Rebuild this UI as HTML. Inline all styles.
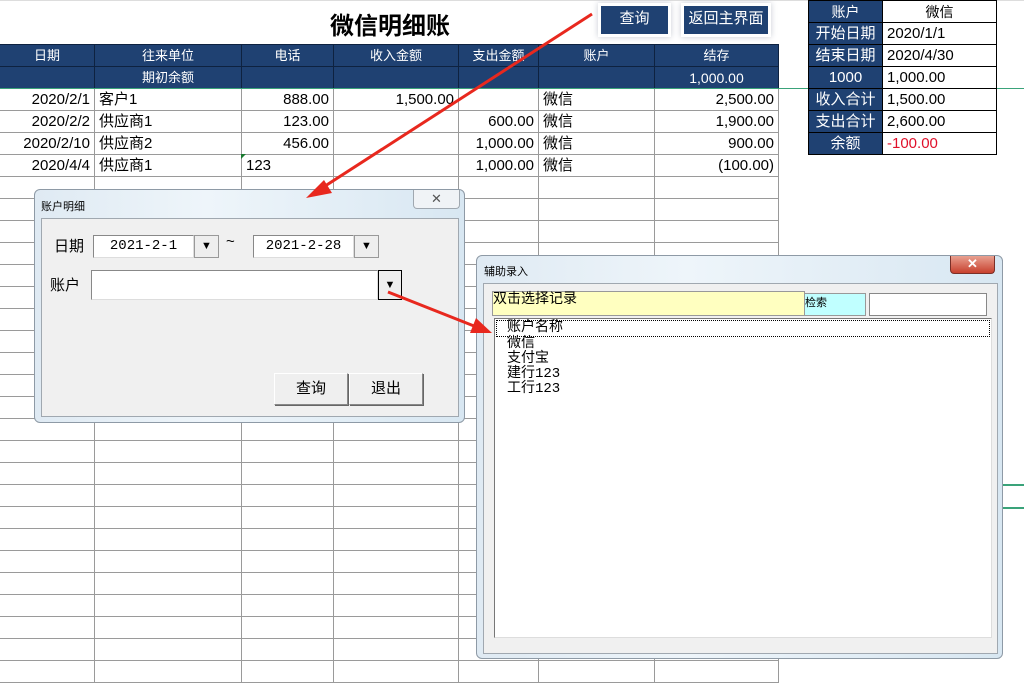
<!DOCTYPE html>
<html><head><meta charset="utf-8"><style>
*{margin:0;padding:0;box-sizing:border-box}
body{width:1024px;height:692px;overflow:hidden;background:#fff;position:relative;font-family:"Liberation Sans","Noto Sans CJK SC",sans-serif;font-size:15px;color:#000}
.a{position:absolute}
table{border-collapse:collapse;position:absolute}
td{border:1px solid #9a9a9a;height:22px;padding:0 4px;white-space:nowrap;overflow:hidden;font-size:15px;line-height:20px}
.h td{background:#1f4172;color:#fff;text-align:center;font-size:13px;border-color:#0e2240}
.h td.r{font-size:14px}
.r{text-align:right}
.btn{position:absolute;background:#1f4172;color:#fff;text-align:center;font-size:15px;line-height:26px;box-shadow:0 0 0 3px #fff,0 0 6px 3px #c8ccd4}
.dlg{position:absolute;background:linear-gradient(90deg,#dfeaf3,#eef5fa 40%,#d8e7f2);border:1px solid #8e9aa6;border-radius:6px}
.inner{position:absolute;background:#f0f0f0;border:1px solid #a0a8b0}
.f{position:absolute;background:#fff;border:1px solid #888;border-right-color:#ddd;border-bottom-color:#ddd;font-family:"Liberation Mono","Noto Sans CJK SC",monospace;font-size:14px;text-align:center;line-height:18px}
.dd{position:absolute;background:#eee;border:1px solid #999;font-size:11px;text-align:center;line-height:20px}
.pb{position:absolute;background:#efefef;border:1px solid #888;border-top-color:#fff;border-left-color:#fff;box-shadow:1px 1px 0 #666;text-align:center;font-size:15px;line-height:30px}
</style></head><body>
<div class="a" style="left:0;top:0;width:1024px;height:1px;background:#ddd"></div>
<div class="a" style="left:330px;top:6px;font-size:24px;font-weight:bold">微信明细账</div>
<div class="btn" style="left:601px;top:6px;width:67px;height:28px">查询</div>
<div class="btn" style="left:684px;top:6px;width:84px;height:28px">返回主界面</div>

<table style="left:-1px;top:44px">
<colgroup><col style="width:95px"><col style="width:147px"><col style="width:92px"><col style="width:125px"><col style="width:80px"><col style="width:116px"><col style="width:124px"></colgroup>
<tr class="h"><td>日期</td><td>往来单位</td><td>电话</td><td>收入金额</td><td>支出金额</td><td>账户</td><td>结存</td></tr>
<tr class="h"><td></td><td>期初余额</td><td></td><td></td><td></td><td></td><td class="r">1,000.00</td></tr>
<tr><td class="r">2020/2/1</td><td>客户1</td><td class="r">888.00</td><td class="r">1,500.00</td><td></td><td>微信</td><td class="r">2,500.00</td></tr>
<tr><td class="r">2020/2/2</td><td>供应商1</td><td class="r">123.00</td><td></td><td class="r">600.00</td><td>微信</td><td class="r">1,900.00</td></tr>
<tr><td class="r">2020/2/10</td><td>供应商2</td><td class="r">456.00</td><td></td><td class="r">1,000.00</td><td>微信</td><td class="r">900.00</td></tr>
<tr><td class="r">2020/4/4</td><td>供应商1</td><td>123</td><td></td><td class="r">1,000.00</td><td>微信</td><td class="r">(100.00)</td></tr>
<tr><td></td><td></td><td></td><td></td><td></td><td></td><td></td></tr><tr><td></td><td></td><td></td><td></td><td></td><td></td><td></td></tr><tr><td></td><td></td><td></td><td></td><td></td><td></td><td></td></tr><tr><td></td><td></td><td></td><td></td><td></td><td></td><td></td></tr><tr><td></td><td></td><td></td><td></td><td></td><td></td><td></td></tr><tr><td></td><td></td><td></td><td></td><td></td><td></td><td></td></tr><tr><td></td><td></td><td></td><td></td><td></td><td></td><td></td></tr><tr><td></td><td></td><td></td><td></td><td></td><td></td><td></td></tr><tr><td></td><td></td><td></td><td></td><td></td><td></td><td></td></tr><tr><td></td><td></td><td></td><td></td><td></td><td></td><td></td></tr><tr><td></td><td></td><td></td><td></td><td></td><td></td><td></td></tr><tr><td></td><td></td><td></td><td></td><td></td><td></td><td></td></tr><tr><td></td><td></td><td></td><td></td><td></td><td></td><td></td></tr><tr><td></td><td></td><td></td><td></td><td></td><td></td><td></td></tr><tr><td></td><td></td><td></td><td></td><td></td><td></td><td></td></tr><tr><td></td><td></td><td></td><td></td><td></td><td></td><td></td></tr><tr><td></td><td></td><td></td><td></td><td></td><td></td><td></td></tr><tr><td></td><td></td><td></td><td></td><td></td><td></td><td></td></tr><tr><td></td><td></td><td></td><td></td><td></td><td></td><td></td></tr><tr><td></td><td></td><td></td><td></td><td></td><td></td><td></td></tr><tr><td></td><td></td><td></td><td></td><td></td><td></td><td></td></tr><tr><td></td><td></td><td></td><td></td><td></td><td></td><td></td></tr><tr><td></td><td></td><td></td><td></td><td></td><td></td><td></td></tr>
</table>
<div class="a" style="left:0;top:88px;width:1024px;height:1px;background:#3aa37a"></div>
<div class="a" style="left:241px;top:154px;width:0;height:0;border-top:5px solid #1a7a30;border-right:5px solid transparent"></div>

<table style="left:808px;top:0">
<colgroup><col style="width:74px"><col style="width:114px"></colgroup>
<tr><td style="background:#1f4172;color:#fff;text-align:center;border-color:#000;font-size:14px">账户</td><td style="text-align:center;border-color:#000;font-size:14px">微信</td></tr>
<tr><td style="background:#1f4172;color:#fff;text-align:center;border-color:#000">开始日期</td><td style="border-color:#000">2020/1/1</td></tr>
<tr><td style="background:#1f4172;color:#fff;text-align:center;border-color:#000">结束日期</td><td style="border-color:#000">2020/4/30</td></tr>
<tr><td style="background:#1f4172;color:#fff;text-align:center;border-color:#000">1000</td><td style="border-color:#000">1,000.00</td></tr>
<tr><td style="background:#1f4172;color:#fff;text-align:center;border-color:#000">收入合计</td><td style="border-color:#000">1,500.00</td></tr>
<tr><td style="background:#1f4172;color:#fff;text-align:center;border-color:#000">支出合计</td><td style="border-color:#000">2,600.00</td></tr>
<tr><td style="background:#1f4172;color:#fff;text-align:center;border-color:#000">余额</td><td style="border-color:#000;color:#e0102a">-100.00</td></tr>
</table>
<div class="a" style="left:1003px;top:484px;width:21px;height:2px;background:#3aa37a"></div>
<div class="a" style="left:1003px;top:507px;width:21px;height:2px;background:#3aa37a"></div>

<!-- dialog 1 -->
<div class="dlg" style="left:34px;top:189px;width:431px;height:234px">
<div class="a" style="left:6px;top:8px;font-size:11px">账户明细</div>
<div class="a" style="left:378px;top:0;width:47px;height:19px;border:1px solid #a0a8b0;border-top:none;border-radius:0 0 4px 4px;background:#f0f3f6;text-align:center;font-size:13px;color:#555;line-height:17px">✕</div>
<div class="inner" style="left:6px;top:28px;width:418px;height:199px">
<div class="a" style="left:12px;top:16px;font-size:15px">日期</div>
<div class="f" style="left:51px;top:16px;width:101px;height:23px;line-height:21px">2021-2-1</div>
<div class="dd" style="left:152px;top:16px;width:25px;height:23px">▼</div>
<div class="a" style="left:184px;top:14px;font-size:15px">~</div>
<div class="f" style="left:211px;top:16px;width:101px;height:23px;line-height:21px">2021-2-28</div>
<div class="dd" style="left:312px;top:16px;width:25px;height:23px">▼</div>
<div class="a" style="left:8px;top:55px;font-size:15px">账户</div>
<div class="f" style="left:49px;top:51px;width:287px;height:30px"></div>
<div class="dd" style="left:336px;top:51px;width:24px;height:30px;border-color:#000;line-height:28px">▼</div>
<div class="pb" style="left:232px;top:154px;width:74px;height:32px">查询</div>
<div class="pb" style="left:307px;top:154px;width:74px;height:32px">退出</div>
</div></div>

<!-- dialog 2 -->
<div class="dlg" style="left:476px;top:255px;width:527px;height:404px">
<div class="a" style="left:7px;top:7px;font-size:11px">辅助录入</div>
<div class="a" style="left:473px;top:0;width:45px;height:18px;background:linear-gradient(#e8a090,#c8412e);border:1px solid #7a3028;border-top:none;border-radius:0 0 4px 4px;color:#fff;text-align:center;font-size:13px;font-weight:bold;line-height:16px">✕</div>
<div class="inner" style="left:6px;top:27px;width:515px;height:371px">
<div class="a" style="left:8px;top:7px;width:313px;height:25px;background:#ffffc0;border:1px solid #999;font-size:14px;line-height:16px;font-family:'Liberation Mono','Noto Sans CJK SC',monospace">双击选择记录</div>
<div class="a" style="left:320px;top:9px;width:62px;height:23px;background:#c0ffff;border:1px solid #999;font-size:11px">检索</div>
<div class="a" style="left:385px;top:9px;width:118px;height:23px;background:#fff;border:1px solid #888"></div>
<div class="a" style="left:10px;top:34px;width:498px;height:320px;background:#fff;border:1px solid #777;border-right-color:#ddd;border-bottom-color:#ddd;font-family:'Liberation Mono','Noto Sans CJK SC',monospace;font-size:14px;line-height:15px">
<div style="border:1px dotted #000;padding-left:10px;margin:1px 1px 0">账户名称</div>
<div style="padding-left:12px">微信<br>支付宝<br>建行123<br>工行123</div>
</div>
</div></div>

<svg class="a" style="left:0;top:0" width="1024" height="692">
<line x1="592" y1="14" x2="322" y2="188" stroke="#e8281e" stroke-width="3"/>
<polygon points="306,198 324,180 332,193" fill="#e8281e"/>
<line x1="388" y1="292" x2="474" y2="326" stroke="#e8281e" stroke-width="3"/>
<polygon points="492,333 470,333 476,318" fill="#e8281e"/>
</svg>
</body></html>
